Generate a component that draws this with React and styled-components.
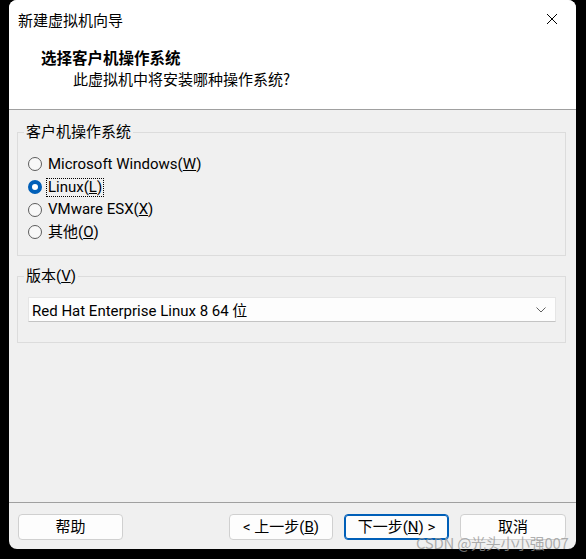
import React from 'react';
import styled, { createGlobalStyle } from 'styled-components';

const GlobalStyle = createGlobalStyle`
    *, *::before, *::after {
        box-sizing: border-box;
    }
    html, body {
        margin: 0;
        padding: 0;
        background: #000;
    }
    body {
        font-family: Roboto, "Noto Sans CJK SC", sans-serif;
        font-size: 15px;
        color: #000;
    }
`;

const Screen = styled.div`
    width: 586px;
    height: 559px;
    position: relative;
    overflow: hidden;
`;

const Window = styled.div`
    margin-left: 9px;
    width: 567px;
    height: 549px;
    background: #f0f0f0;
    border-radius: 8px;
    overflow: hidden;
    display: flex;
    flex-direction: column;
`;

const Header = styled.div`
    height: 110px;
    flex: none;
    background: #fff;
    border-bottom: 1px solid #a0a0a0;
    display: flex;
    flex-direction: column;
`;

const TitleBar = styled.div`
    height: 38px;
    display: flex;
    align-items: center;
    justify-content: space-between;
    padding: 0 18px 0 9px;
`;

const TitleText = styled.span`
    font-family: "Noto Sans CJK SC", sans-serif;
    font-size: 15px;
    line-height: 1;
`;

const CloseButton = styled.span`
    display: flex;
    width: 12px;
    height: 12px;
`;

const Heading = styled.div`
    font-family: "Noto Sans CJK SC", sans-serif;
    font-weight: 700;
    font-size: 15.5px;
    line-height: 20px;
    margin: 9px 0 0 32px;
`;

const SubHeading = styled.div`
    font-family: "Noto Sans CJK SC", sans-serif;
    font-size: 15px;
    line-height: 20px;
    margin: 2px 0 0 64px;
`;

const Body = styled.div`
    flex: 1;
    display: flex;
    flex-direction: column;
    padding: 13px 10px 0 8px;
    gap: 11px;
`;

const GroupBox = styled.fieldset`
    margin: 0;
    border: 1px solid #dcdcdc;
    border-radius: 0;
    padding: ${props => props.$padding};
    min-width: 0;
    height: ${props => props.$height}px;
`;

const Legend = styled.legend`
    padding: 0 2px;
    margin-left: -4px;
    font-size: 15px;
    line-height: 18px;
    font-family: Roboto, "Noto Sans CJK SC", sans-serif;
`;

const RadioList = styled.div`
    display: flex;
    flex-direction: column;
`;

const RadioRow = styled.label`
    height: 22.7px;
    display: flex;
    align-items: center;
    gap: 4px;
`;

const RadioDot = styled.span`
    width: 14px;
    height: 14px;
    border-radius: 50%;
    flex: none;
    border: ${props => (props.$checked ? '4px solid #005fb8' : '1px solid #5c5c5c')};
    background: ${props => (props.$checked ? '#fff' : '#f8f8f8')};
`;

const RadioText = styled.span`
    line-height: 17px;
    padding: 0 1px;
    border: 1px dotted ${props => (props.$focused ? '#000' : 'transparent')};
`;

const Select = styled.div`
    height: 25px;
    background: #fdfdfd;
    border: 1px solid #e5e5e5;
    border-bottom-color: #c4c4c4;
    display: flex;
    align-items: center;
    justify-content: space-between;
    padding: 0 9px 0 3px;
`;

const Spacer = styled.div`
    flex: 1;
`;

const Footer = styled.div`
    height: 47px;
    flex: none;
    border-top: 1px solid #a0a0a0;
    display: flex;
    align-items: flex-start;
    padding: 11px 10px 0 9px;
    gap: 11px;
`;

const Button = styled.button`
    width: ${props => props.$width || 105}px;
    height: 26px;
    border-radius: 4px;
    background: #fdfdfd;
    border: 1px solid ${props => (props.$primary ? '#005fb8' : '#d0d0d0')};
    box-shadow: ${props => (props.$primary ? 'inset 0 0 0 1px #005fb8' : 'none')};
    font-family: Roboto, "Noto Sans CJK SC", sans-serif;
    font-size: 15px;
    color: #000;
    padding: 0;
    line-height: 1;
    margin-left: ${props => props.$push ? 'auto' : '0'};
`;

const Watermark = styled.div`
    position: absolute;
    left: 416px;
    top: 532px;
    font-family: "Noto Sans CJK SC", sans-serif;
    font-size: 15px;
    color: rgba(150, 150, 150, 0.75);
    letter-spacing: -0.3px;
`;

const osOptions = [
    { label: 'Microsoft Windows(', key: 'W' },
    { label: 'Linux(', key: 'L', checked: true },
    { label: 'VMware ESX(', key: 'X' },
    { label: '其他(', key: 'O' }
];

const CloseIcon = () => (
    <CloseButton>
        <svg width="12" height="12" viewBox="0 0 12 12">
            <path d="M1 1 L11 11 M11 1 L1 11" stroke="#000" strokeWidth="1" fill="none" />
        </svg>
    </CloseButton>
);

const Chevron = () => (
    <svg width="10" height="6" viewBox="0 0 10 6">
        <path d="M0.5 0.5 L5 5 L9.5 0.5" stroke="#606060" strokeWidth="1" fill="none" />
    </svg>
);

const App = () => {
    return (
        <Screen>
            <GlobalStyle />
            <Window>
                <Header>
                    <TitleBar>
                        <TitleText>新建虚拟机向导</TitleText>
                        <CloseIcon />
                    </TitleBar>
                    <Heading>选择客户机操作系统</Heading>
                    <SubHeading>此虚拟机中将安装哪种操作系统?</SubHeading>
                </Header>
                <Body>
                    <GroupBox $height={133} $padding="12px 8px 0 10px">
                        <Legend>客户机操作系统</Legend>
                        <RadioList>
                            {osOptions.map(option => (
                                <RadioRow key={option.key}>
                                    <RadioDot $checked={option.checked} />
                                    <RadioText $focused={option.checked}>
                                        {option.label}<u>{option.key}</u>)
                                    </RadioText>
                                </RadioRow>
                            ))}
                        </RadioList>
                    </GroupBox>
                    <GroupBox $height={76} $padding="12px 9px 0 10px">
                        <Legend>版本(<u>V</u>)</Legend>
                        <Select>
                            <span>Red Hat Enterprise Linux 8 64 位</span>
                            <Chevron />
                        </Select>
                    </GroupBox>
                    <Spacer />
                </Body>
                <Footer>
                    <Button>帮助</Button>
                    <Button $push $width={104}>&lt; 上一步(<u>B</u>)</Button>
                    <Button $primary>下一步(<u>N</u>) &gt;</Button>
                    <Button $width={106}>取消</Button>
                </Footer>
            </Window>
            <Watermark>CSDN @光头小小强007</Watermark>
        </Screen>
    );
};

export default App;
